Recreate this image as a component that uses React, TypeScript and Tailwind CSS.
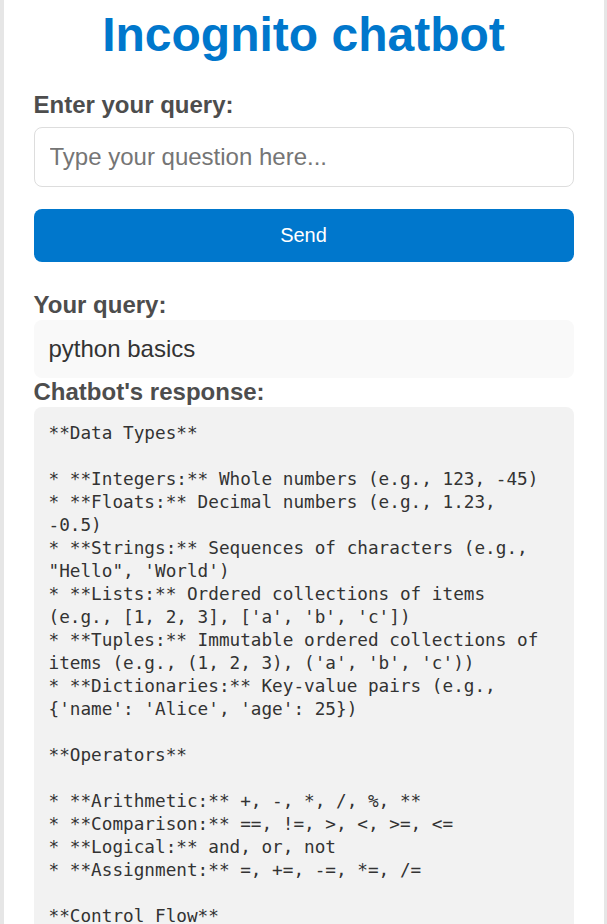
import { useState } from "react";

const response = `**Data Types**

* **Integers:** Whole numbers (e.g., 123, -45)
* **Floats:** Decimal numbers (e.g., 1.23,
-0.5)
* **Strings:** Sequences of characters (e.g.,
"Hello", 'World')
* **Lists:** Ordered collections of items
(e.g., [1, 2, 3], ['a', 'b', 'c'])
* **Tuples:** Immutable ordered collections of
items (e.g., (1, 2, 3), ('a', 'b', 'c'))
* **Dictionaries:** Key-value pairs (e.g.,
{'name': 'Alice', 'age': 25})

**Operators**

* **Arithmetic:** +, -, *, /, %, **
* **Comparison:** ==, !=, >, <, >=, <=
* **Logical:** and, or, not
* **Assignment:** =, +=, -=, *=, /=

**Control Flow**

* **if/elif/else:** Conditional execution
* **for loops:** Iterate over sequences
* **while loops:** Repeat while a condition
is true`;

export default function App() {
  const [query, setQuery] = useState("");

  return (
    <div className="min-h-screen bg-[#e6e6e6]">
      <div className="max-w-[600px] mx-auto bg-white px-[30px] pt-[7px] pb-[30px] font-['Liberation_Sans',Arial,sans-serif]">
        <h1 className="text-center text-[48px] leading-[55px] font-bold text-[#0077cc]">
          Incognito chatbot
        </h1>

        <label className="block mt-[29px] mb-[8px] text-[24px] leading-[28px] font-bold text-[#4d4d4d]">
          Enter your query:
        </label>
        <input
          value={query}
          onChange={(e) => setQuery(e.target.value)}
          placeholder="Type your question here..."
          className="block w-full rounded-[8px] border border-[#dddddd] px-[15px] py-[15px] text-[24px] leading-[28px] text-[#333] placeholder:text-[#757575] outline-none"
        />
        <button className="block w-full mt-[22px] rounded-[8px] bg-[#0077cc] py-[15px] text-[20px] leading-[23px] text-white">
          Send
        </button>

        <h3 className="mt-[29px] text-[24px] leading-[28px] font-bold text-[#4d4d4d]">
          Your query:
        </h3>
        <div className="mt-[1px] rounded-[8px] bg-[#f9f9f9] p-[15px] text-[24px] leading-[28px] text-[#333]">
          python basics
        </div>

        <h3 className="text-[24px] leading-[28px] font-bold text-[#4d4d4d]">
          Chatbot's response:
        </h3>
        <div className="mt-[1px] rounded-[8px] bg-[#f2f2f2] p-[15px]">
          <pre className="whitespace-pre-wrap font-['DejaVu_Sans_Mono',monospace] text-[17.7px] leading-[23px] text-[#333]">
            {response}
          </pre>
        </div>
      </div>
    </div>
  );
}
